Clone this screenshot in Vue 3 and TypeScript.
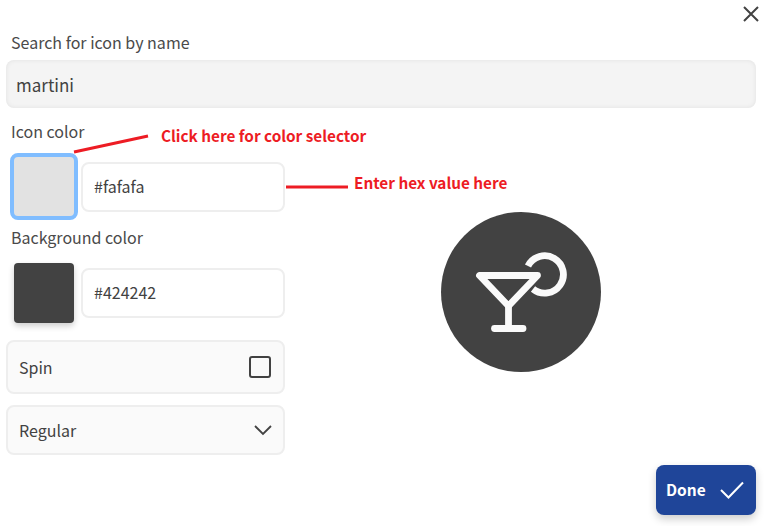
<template>
  <div class="dialog">
    <div class="top-bar">
      <button class="close-btn" aria-label="Close">
        <svg width="18" height="18" viewBox="0 0 18 18"><path d="M2 2 L16 16 M16 2 L2 16" stroke="#424242" stroke-width="2" fill="none" /></svg>
      </button>
    </div>

    <div class="field-label">Search for icon by name</div>
    <div class="search-input">{{ search }}</div>

    <div class="main">
      <div class="left-col">
        <div class="field-label icon-label">Icon color</div>
        <div class="color-row icon-row">
          <div class="swatch swatch-icon"></div>
          <div class="hex-input">{{ iconColor }}</div>
        </div>

        <div class="field-label bg-label">Background color</div>
        <div class="color-row bg-row">
          <div class="swatch swatch-bg"></div>
          <div class="hex-input">{{ bgColor }}</div>
        </div>

        <div class="option-box spin-box">
          <span>Spin</span>
          <span class="checkbox"></span>
        </div>
        <div class="option-box style-box">
          <span>Regular</span>
          <svg width="20" height="12" viewBox="0 0 20 12"><path d="M2 2 L10 10 L18 2" stroke="#424242" stroke-width="1.8" fill="none" /></svg>
        </div>
      </div>

      <div class="preview">
        <div class="preview-circle">
          <svg width="160" height="160" viewBox="0 0 160 160">
            <g fill="none" stroke="#fafafa" stroke-width="6.800" stroke-linecap="round" stroke-linejoin="round">
              <path d="M38.500 63.500 H96.500 L67.500 94 Z" />
              <path d="M67.500 94 V116.500" />
              <path d="M53.500 116.500 H82" />
              <path d="M87 54 A18.700 18.700 0 1 1 92 77" stroke-linecap="butt" />
            </g>
          </svg>
        </div>
      </div>
    </div>

    <div class="footer">
      <button class="done-btn">
        <span class="done-text">Done</span>
        <svg width="26" height="20" viewBox="0 0 26 20"><path d="M2 10 L9.500 17.500 L24 2.500" stroke="#fff" stroke-width="2" fill="none" /></svg>
      </button>
    </div>

    <!-- red notes drawn over the screenshot -->
    <svg class="notes" width="769" height="526">
      <path d="M74 152 L148 136" stroke="#ed1c24" stroke-width="3" />
      <path d="M286 187 H348" stroke="#ed1c24" stroke-width="3" />
    </svg>
    <span class="note note-color">Click here for color selector</span>
    <span class="note note-hex">Enter hex value here</span>
  </div>
</template>

<script setup lang="ts">
import { ref } from 'vue'

const search = ref('martini')
const iconColor = ref('#fafafa')
const bgColor = ref('#424242')
</script>

<style>
html, body {
  margin: 0;
  background: #fff;
}
</style>

<style scoped>
.dialog {
  position: relative;
  width: 769px;
  height: 526px;
  overflow: hidden;
  box-sizing: border-box;
  padding: 0 13px 11px 6px;
  display: flex;
  flex-direction: column;
  background: #fff;
  font-family: "Noto Sans CJK SC", "Noto Sans", sans-serif;
  font-size: 16px;
  color: #424242;
}

.top-bar {
  height: 30px;
  display: flex;
  justify-content: flex-end;
  flex-shrink: 0;
}

.close-btn {
  border: 0;
  padding: 0;
  background: none;
  width: 18px;
  height: 18px;
  margin: 5px -4px 0 0;
}

.field-label {
  margin-left: 5px;
  line-height: 24px;
  height: 24px;
  font-size: 16px;
  color: #4a4a4a;
}

.search-input {
  margin-top: 6px;
  height: 48px;
  box-sizing: border-box;
  border-radius: 8px;
  background: #f4f4f4;
  box-shadow: inset 0 0 5px rgba(0, 0, 0, .08);
  padding-left: 10px;
  line-height: 50px;
  font-size: 17px;
}

.main {
  display: flex;
  flex: 1;
  min-height: 0;
}

.left-col {
  width: 279px;
  flex-shrink: 0;
  display: flex;
  flex-direction: column;
}

.icon-label {
  margin-top: 11px;
}

.color-row {
  display: flex;
  align-items: center;
  height: 67px;
}

.icon-row {
  margin-top: 10px;
  padding-left: 4px;
}

.bg-label {
  margin-top: 5px;
}

.bg-row {
  margin-top: 10px;
  padding-left: 8px;
}

.swatch {
  box-sizing: border-box;
  flex-shrink: 0;
}

.swatch-icon {
  width: 68px;
  height: 67px;
  background: #e2e2e2;
  border: 4px solid #80bdff;
  border-radius: 8px;
  margin-right: 3px;
}

.swatch-bg {
  width: 60px;
  height: 60px;
  background: #424242;
  border-radius: 4px;
  margin-right: 7px;
  box-shadow: 0 3px 6px rgba(0, 0, 0, .2);
}

.hex-input {
  flex: 1;
  height: 50px;
  box-sizing: border-box;
  border: 2px solid #eee;
  border-radius: 8px;
  padding-left: 11px;
  line-height: 45px;
  font-size: 16px;
  background: #fff;
}

.option-box {
  box-sizing: border-box;
  display: flex;
  align-items: center;
  justify-content: space-between;
  border: 2px solid #eee;
  border-radius: 8px;
  background: #fafafa;
  padding-left: 11px;
}

.spin-box {
  margin-top: 14px;
  height: 54px;
  padding-right: 12px;
}

.style-box {
  margin-top: 11px;
  height: 50px;
  padding-right: 10px;
}

.checkbox {
  width: 22px;
  height: 22px;
  box-sizing: border-box;
  border: 2px solid #424242;
  border-radius: 3px;
}

.preview {
  flex: 1;
  display: flex;
  justify-content: center;
}

.preview-circle {
  width: 160px;
  height: 160px;
  margin-top: 104px;
  border-radius: 50%;
  background: #424242;
}

.preview-circle svg {
  display: block;
}

.footer {
  display: flex;
  justify-content: flex-end;
  flex-shrink: 0;
}

.done-btn {
  width: 100px;
  height: 50px;
  border: 0;
  border-radius: 8px;
  background: #1f4599;
  color: #fff;
  font-family: inherit;
  font-size: 15.500px;
  font-weight: 700;
  display: flex;
  align-items: center;
  justify-content: space-between;
  padding: 0 11px 0 10px;
  box-shadow: 0 4px 8px rgba(0, 0, 0, .2);
}

.done-text {
  margin-top: -2px;
}

.notes {
  position: absolute;
  left: 0;
  top: 0;
  pointer-events: none;
}

.note {
  position: absolute;
  color: #ed1c24;
  font-size: 15.300px;
  font-weight: 700;
  line-height: 20px;
  white-space: nowrap;
}

.note-color {
  left: 161px;
  top: 125px;
}

.note-hex {
  left: 354px;
  top: 172px;
}
</style>
